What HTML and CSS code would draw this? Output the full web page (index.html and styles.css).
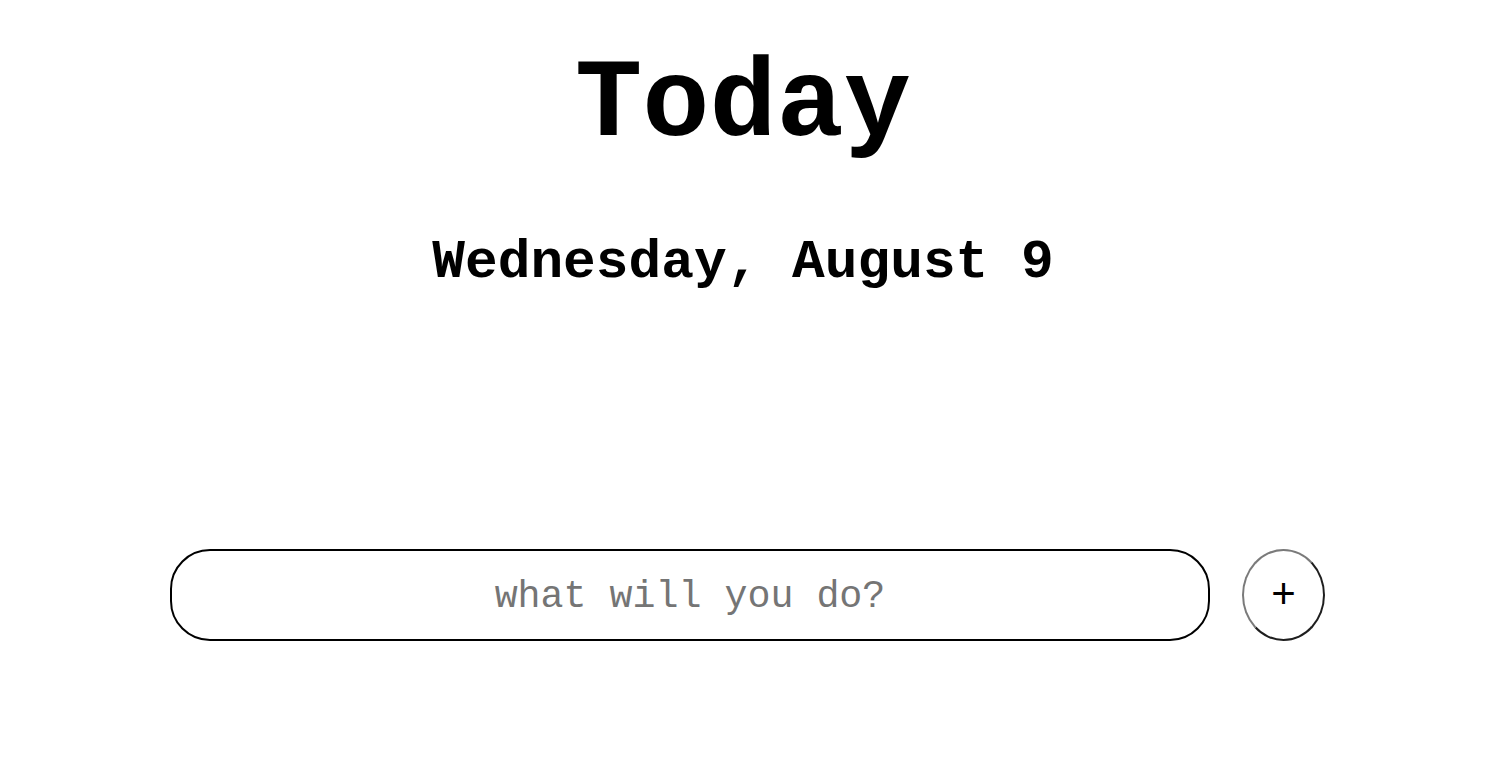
FILE: index.html
```html
<!DOCTYPE html>
<html lang="en">
<head>
<meta charset="utf-8">
<title>Today</title>
<link rel="stylesheet" href="styles.css">
</head>
<body>
<main class="app">
  <header class="head">
    <h1 class="title">Today</h1>
    <h2 class="date">Wednesday, August 9</h2>
  </header>
  <ul class="list"></ul>
  <form class="entry">
    <input class="task-input" type="text" placeholder="what will you do?">
    <button class="add-btn" type="button">+</button>
  </form>
</main>
</body>
</html>
```
FILE: styles.css
```css
html, body {
  margin: 0;
  padding: 0;
  background: #fff;
}
body {
  font-family: "Courier New", "Liberation Mono", monospace;
  color: #000;
}
.app {
  display: flex;
  flex-direction: column;
  align-items: center;
  padding: 42px 14px 0 0;
}
.head {
  display: flex;
  flex-direction: column;
  align-items: center;
}
.title {
  margin: 0;
  font-size: 112px;
  line-height: 128px;
  font-weight: 700;
}
.date {
  margin: 61px 0 0;
  font-size: 54.5px;
  line-height: 64px;
  font-weight: 700;
}
.list {
  margin: 0;
  padding: 0;
  height: 254px;
  list-style: none;
}
.entry {
  display: flex;
  align-items: center;
  gap: 32px;
  margin-left: 9px;
}
.task-input {
  box-sizing: border-box;
  width: 1040px;
  height: 92px;
  border: 2px solid #000;
  border-radius: 40px;
  font-family: "Courier New", "Liberation Mono", monospace;
  font-size: 38.3px;
  text-align: center;
  color: #000;
  background: #fff;
  outline: none;
  padding: 3px 20px 0;
}
.task-input::placeholder {
  color: #757575;
}
.add-btn {
  box-sizing: border-box;
  width: 83px;
  height: 92px;
  border-radius: 50%;
  border: 2px solid;
  border-color: #7a7a7a #1e1e1e #1e1e1e #7a7a7a;
  background: #fff;
  font-family: "Liberation Sans", Arial, sans-serif;
  font-size: 42px;
  line-height: 1;
  color: #000;
  padding: 0 0 3px;
  cursor: pointer;
}
```
